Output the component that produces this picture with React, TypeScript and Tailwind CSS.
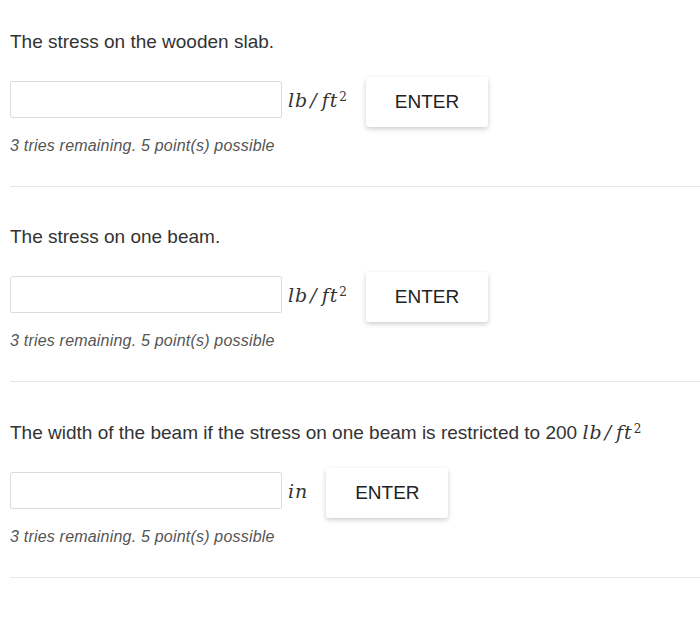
import type { ReactNode } from "react";

type Question = {
  prompt: ReactNode;
  unit: ReactNode;
};

const mathFont = { fontFamily: '"DejaVu Serif", "Liberation Serif", serif' };

function LbFt2() {
  return (
    <span className="italic text-[19px] tracking-[1px] text-[#333] whitespace-nowrap" style={mathFont}>
      lb<span className="ml-[2px] mr-[4px]">/</span>ft<sup className="text-[12px] not-italic ml-[1px]">2</sup>
    </span>
  );
}

const questions: Question[] = [
  { prompt: "The stress on the wooden slab.", unit: <LbFt2 /> },
  { prompt: "The stress on one beam.", unit: <LbFt2 /> },
  {
    prompt: (
      <>
        The width of the beam if the stress on one beam is restricted to 200 <LbFt2 />
      </>
    ),
    unit: (
      <span className="italic text-[19px] tracking-[1px] text-[#333]" style={mathFont}>
        in
      </span>
    ),
  },
];

function QuestionBlock({ q, first }: { q: Question; first: boolean }) {
  return (
    <div className={first ? "pt-[31px]" : "pt-[39px]"}>
      <p className="text-[19px] leading-[22px] text-[#333] pl-[10px] whitespace-nowrap">{q.prompt}</p>
      <div className="flex items-start mt-[24px] pl-[10px]">
        <input
          type="text"
          className="mt-[4px] w-[272px] h-[37px] border border-[#dcdcdc] rounded-[2px] bg-white outline-none"
        />
        <div className="h-[46px] flex items-center pl-[6px] pr-[18px]">{q.unit}</div>
        <button className="w-[122px] h-[50px] bg-white rounded-[3px] shadow-[0_2px_5px_rgba(0,0,0,0.2)] text-[19px] font-medium text-[#222]">
          ENTER
        </button>
      </div>
      <p className="mt-[10px] pl-[10px] text-[16px] leading-[18px] italic text-[#555] tracking-[0.2px]">
        3 tries remaining. 5 point(s) possible
      </p>
      <div className="mt-[31px] ml-[10px] h-px bg-[#e6e6e6]" />
    </div>
  );
}

export default function App() {
  return (
    <div className="min-h-[622px] bg-white" style={{ fontFamily: '"Liberation Sans", Arial, sans-serif' }}>
      {questions.map((q, i) => (
        <QuestionBlock key={i} q={q} first={i === 0} />
      ))}
    </div>
  );
}
